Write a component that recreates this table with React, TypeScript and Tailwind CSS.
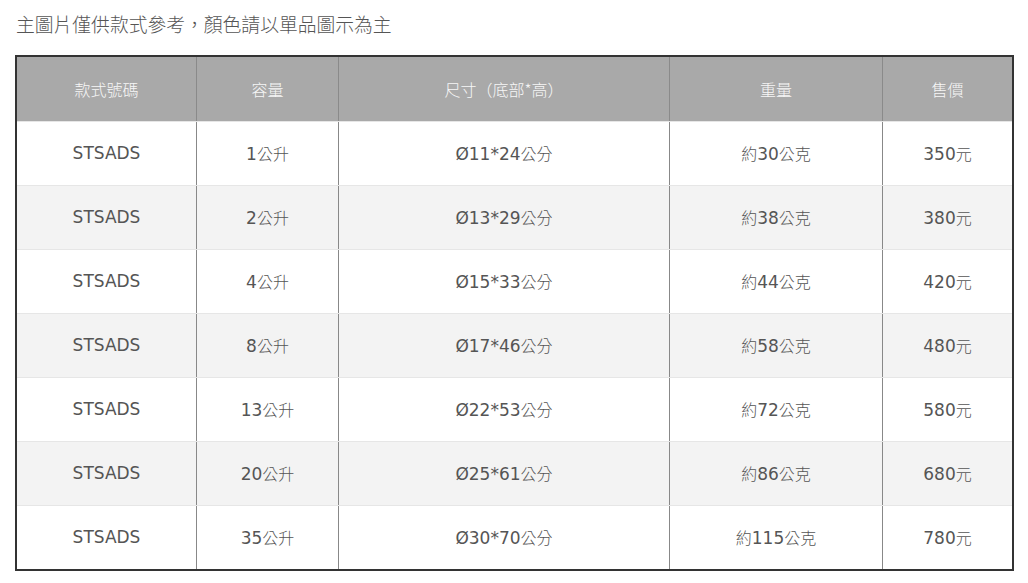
import React from 'react';

const rows = [
  { code: 'STSADS', cap: '1', size: '11*24', weight: '30', price: '350' },
  { code: 'STSADS', cap: '2', size: '13*29', weight: '38', price: '380' },
  { code: 'STSADS', cap: '4', size: '15*33', weight: '44', price: '420' },
  { code: 'STSADS', cap: '8', size: '17*46', weight: '58', price: '480' },
  { code: 'STSADS', cap: '13', size: '22*53', weight: '72', price: '580' },
  { code: 'STSADS', cap: '20', size: '25*61', weight: '86', price: '680' },
  { code: 'STSADS', cap: '35', size: '30*70', weight: '115', price: '780' },
];

const cols = 'grid grid-cols-[179px_142px_331px_213px_1fr]';
const cell = 'flex items-center justify-center h-[63px]';
const num = "font-['DejaVu_Sans',sans-serif] text-[17px]";
const cjk = "font-['Noto_Sans_CJK_TC',sans-serif] font-light text-[16px]";

export default function App() {
  return (
    <div className="w-[1028px] h-[583px] bg-white overflow-hidden">
      <p className={`pl-4 pt-[10px] text-[18.8px] leading-[28px] text-[#555] font-['Noto_Sans_CJK_TC',sans-serif] font-light`}>
        主圖片僅供款式參考，顏色請以單品圖示為主
      </p>
      <div className="ml-[15px] mt-[17px] w-[999px] border-2 border-[#333]">
        <div className={`${cols} bg-[#a9a9a9] text-[#f7f7f7] ${cjk}`}>
          <div className={`${cell} h-[64px]`}>款式號碼</div>
          <div className={`${cell} h-[64px] border-l border-[#8a8a8a]`}>容量</div>
          <div className={`${cell} h-[64px] border-l border-[#8a8a8a]`}>尺寸（底部*高）</div>
          <div className={`${cell} h-[64px] border-l border-[#8a8a8a]`}>重量</div>
          <div className={`${cell} h-[64px] border-l border-[#8a8a8a]`}>售價</div>
        </div>
        {rows.map((r, i) => (
          <div
            key={i}
            className={`${cols} text-[#555] border-t border-[#e6e6e6] ${i % 2 ? 'bg-[#f3f3f3]' : 'bg-white'}`}
          >
            <div className={`${cell} ${num}`}>{r.code}</div>
            <div className={`${cell} border-l border-[#888]`}>
              <span className="leading-6">
                <span className={num}>{r.cap}</span>
                <span className={cjk}>公升</span>
              </span>
            </div>
            <div className={`${cell} border-l border-[#888]`}>
              <span className="leading-6">
                <span className={num}>Ø{r.size}</span>
                <span className={cjk}>公分</span>
              </span>
            </div>
            <div className={`${cell} border-l border-[#888]`}>
              <span className="leading-6">
                <span className={cjk}>約</span>
                <span className={num}>{r.weight}</span>
                <span className={cjk}>公克</span>
              </span>
            </div>
            <div className={`${cell} border-l border-[#888]`}>
              <span className="leading-6">
                <span className={num}>{r.price}</span>
                <span className={cjk}>元</span>
              </span>
            </div>
          </div>
        ))}
      </div>
    </div>
  );
}
